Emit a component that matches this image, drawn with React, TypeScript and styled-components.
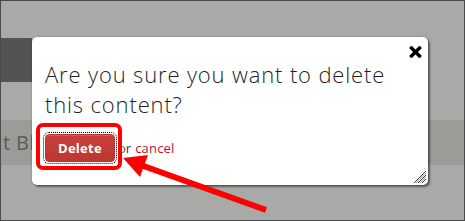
import React from "react";
import styled, { createGlobalStyle } from "styled-components";

const GlobalStyle = createGlobalStyle`
  html, body { margin: 0; padding: 0; background: #a9a9a7; }
  body { font-family: "Open Sans", "Liberation Sans", sans-serif; }
  * { box-sizing: border-box; }
`;

const Page = styled.div`
  position: relative;
  width: 465px;
  height: 221px;
  border: 1px solid #4b4b4b;
  background: #a9a9a7;
  overflow: hidden;
  display: flex;
  flex-direction: column;
`;

const TopGap = styled.div`
  height: 37px;
  flex: none;
`;

const SideBlock = styled.div`
  height: 44px;
  width: 31px;
  background: #535353;
  flex: none;
`;

const MidGap = styled.div`
  height: 38px;
  flex: none;
`;

const ContentRow = styled.div`
  height: 45px;
  flex: none;
  background: #9b9b97;
  display: flex;
  align-items: center;
`;

const RowLabel = styled.span`
  padding-left: 2px;
  font-size: 20px;
  letter-spacing: 0.4px;
  color: #5a5a5a;
  white-space: nowrap;
`;

const Dialog = styled.div`
  position: absolute;
  left: 31px;
  top: 36px;
  width: 396px;
  height: 148px;
  background: #fff;
  border-radius: 5px;
  box-shadow: 0 0 2px rgba(0, 0, 0, 0.35), 2px 2px 2px rgba(0, 0, 0, 0.45);
  padding: 22px 13px 0 13px;
  display: flex;
  flex-direction: column;
`;

const Title = styled.div`
  font-size: 22px;
  line-height: 30px;
  font-weight: 300;
  letter-spacing: 0.85px;
  color: #1f1f1f;
  width: 360px;
`;

const Actions = styled.div`
  margin-top: 15px;
  display: flex;
  align-items: center;
  font-size: 13px;
`;

const DeleteButton = styled.button`
  width: 70px;
  height: 28px;
  border: 1px solid #b8322e;
  border-radius: 4px;
  background: linear-gradient(#c8403b, #bd3732);
  color: #fff;
  font-family: "Open Sans", "Liberation Sans", sans-serif;
  font-weight: 700;
  font-size: 13px;
  letter-spacing: 0.3px;
  padding: 0;
  outline: 1px dotted #000;
  outline-offset: 1px;
  box-shadow: inset 0 1px 0 rgba(255, 255, 255, 0.15);
`;

const OrText = styled.span`
  margin-left: 3px;
  color: #333;
`;

const CancelLink = styled.a`
  margin-left: 4px;
  color: #c8102e;
  text-decoration: none;
  letter-spacing: 0.2px;
`;

const CloseButton = styled.div`
  position: absolute;
  right: 6px;
  top: 9px;
  width: 13px;
  height: 12px;
  display: flex;
`;

const Grip = styled.div`
  position: absolute;
  right: 1px;
  bottom: 1px;
  width: 14px;
  height: 14px;
  display: flex;
`;

const Highlight = styled.div`
  position: absolute;
  left: 35px;
  top: 122px;
  width: 86px;
  height: 47px;
  border: 4px solid #ff0000;
  border-radius: 7px;
  box-shadow: 0 0 3px 1px rgba(255, 255, 255, 0.7);
  pointer-events: none;
`;

const ArrowLayer = styled.svg`
  position: absolute;
  left: -1px;
  top: -1px;
  width: 465px;
  height: 221px;
  pointer-events: none;
`;

export default function App() {
  return (
    <>
      <GlobalStyle />
      <Page>
        <TopGap />
        <SideBlock />
        <MidGap />
        <ContentRow>
          <RowLabel>t Blo</RowLabel>
        </ContentRow>
        <Dialog>
          <Title>Are you sure you want to delete this content?</Title>
          <Actions>
            <DeleteButton>Delete</DeleteButton>
            <OrText>or</OrText>
            <CancelLink href="#">cancel</CancelLink>
          </Actions>
          <CloseButton>
            <svg width="13" height="12" viewBox="0 0 13 12">
              <path d="M2.5 2 L10.5 10 M10.5 2 L2.5 10" stroke="#000" strokeWidth="3.4" strokeLinecap="square" />
            </svg>
          </CloseButton>
          <Grip>
            <svg width="14" height="14" viewBox="0 0 14 14">
              <path d="M1 13 L13 1 M5 13 L13 5 M9 13 L13 9" stroke="#333" strokeWidth="1" />
              <path d="M3 13 L13 3 M7 13 L13 7" stroke="#999" strokeWidth="1" />
            </svg>
          </Grip>
        </Dialog>
        <Highlight />
        <ArrowLayer viewBox="0 0 465 221">
          <line x1="266" y1="210" x2="138" y2="164" stroke="#ff0000" strokeWidth="6" />
          <polygon points="123,158 148,155 140,177" fill="#ff0000" />
        </ArrowLayer>
      </Page>
    </>
  );
}
